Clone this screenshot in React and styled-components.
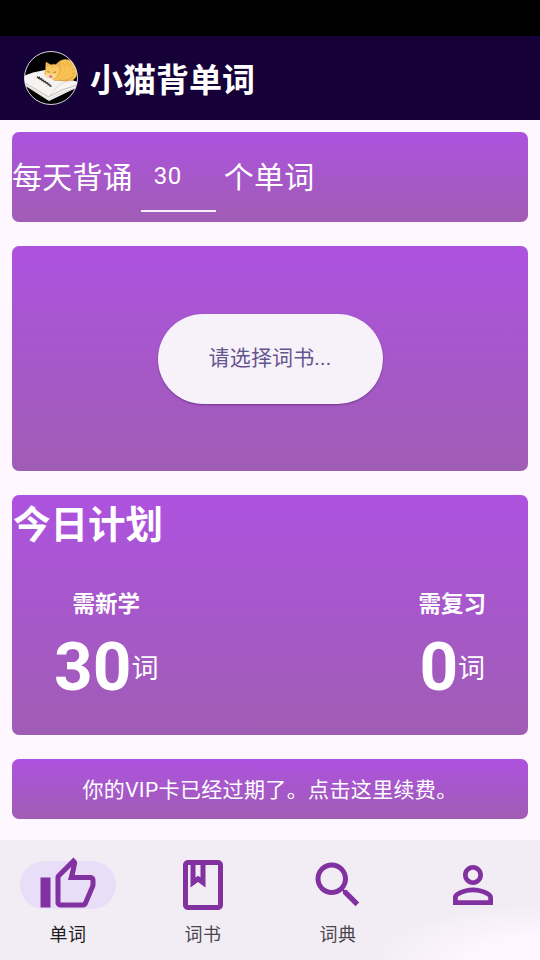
import React from "react";
import styled, { createGlobalStyle } from "styled-components";

const GlobalStyle = createGlobalStyle`
  * {
    box-sizing: border-box;
  }

  body {
    margin: 0;
    background: #fef7ff;
    font-family: Roboto, "Noto Sans CJK SC", sans-serif;
  }
`;

const Screen = styled.div`
  width: 540px;
  height: 960px;
  display: flex;
  flex-direction: column;
  overflow: hidden;
  background: #fef7ff;
`;

const StatusBar = styled.div`
  height: 36px;
  background: #000;
`;

const AppBar = styled.header`
  display: flex;
  align-items: center;
  gap: 12px;
  height: 84px;
  padding-left: 24px;
  background: #160038;
`;

const AppTitle = styled.h1`
  margin: 0;
  padding-top: 6px;
  color: #fff;
  font-size: 33px;
  line-height: 48px;
  font-weight: 700;
`;

const Content = styled.main`
  flex: 1;
  display: flex;
  flex-direction: column;
  gap: 24px;
  padding: 12px 12px 0;
`;

const Card = styled.section`
  height: ${(props) => props.$height}px;
  border-radius: 7px;
  overflow: hidden;
  color: #fff;
  background: linear-gradient(#ad52df, #a05db4);
`;

const GoalCard = styled(Card)`
  display: flex;
  align-items: flex-start;
  font-size: 30px;
  line-height: 44px;
`;

const GoalText = styled.span`
  padding-top: 24px;
  letter-spacing: 0.2px;
`;

const GoalInput = styled.div`
  width: 75px;
  height: 80px;
  margin: 0 8px;
  padding: 22px 0 0 13px;
  border-bottom: 2px solid rgba(255, 255, 255, 0.9);
  font-size: 24px;
  letter-spacing: 0.5px;
`;

const BookCard = styled(Card)`
  display: flex;
  align-items: center;
  justify-content: center;
`;

const BookButton = styled.button`
  width: 225px;
  height: 90px;
  padding: 0 0 5px;
  border: 0;
  border-radius: 45px;
  background: #f7f2fa;
  box-shadow: 0 1px 2px rgba(40, 0, 70, 0.4);
  color: #65558f;
  font-family: inherit;
  font-size: 21px;
  letter-spacing: 0.15px;
`;

const PlanTitle = styled.h2`
  margin: 0;
  padding: 2px 0 0 1px;
  font-size: 37.5px;
  line-height: 56px;
  font-weight: 700;
`;

const PlanRow = styled.div`
  display: flex;
  justify-content: space-between;
  padding: 34px 42px 0;
`;

const PlanItem = styled.div`
  display: flex;
  flex-direction: column;
  align-items: center;
`;

const PlanLabel = styled.div`
  font-size: 22.5px;
  line-height: 34px;
  font-weight: 700;
`;

const PlanCount = styled.div`
  display: flex;
  align-items: center;
  height: 92px;
`;

const Count = styled.span`
  font-size: 67.5px;
  line-height: 80px;
  font-weight: 700;
`;

const Unit = styled.span`
  padding-top: 4px;
  font-size: 27px;
  line-height: 40px;
`;

const VipCard = styled(Card)`
  display: flex;
  align-items: center;
  justify-content: center;
  padding-bottom: 3px;
  font-size: 21px;
  letter-spacing: 0.36px;
`;

const NavBar = styled.nav`
  display: grid;
  grid-template-columns: repeat(4, 1fr);
  height: 120px;
  background:
    radial-gradient(ellipse 165px 55px at 100% 100%, #fdf5ff 45%, rgba(253, 245, 255, 0) 100%),
    #f2edf4;
`;

const NavItem = styled.div`
  display: flex;
  flex-direction: column;
  align-items: center;
  padding-top: 21px;
`;

const Indicator = styled.div`
  display: flex;
  align-items: center;
  justify-content: center;
  width: 96px;
  height: 48px;
  border-radius: 24px;
  background: ${(props) => (props.$active ? "#e8def8" : "transparent")};
  color: #8231a0;
`;

const NavIcon = styled.svg`
  flex: none;
  width: 60px;
  height: 60px;
  fill: currentColor;
`;

const NavLabel = styled.span`
  margin-top: 12px;
  padding-left: 1px;
  color: ${(props) => (props.$active ? "#1d1b20" : "#49454f")};
  font-size: 18px;
  line-height: 27px;
  letter-spacing: 0.4px;
`;

const navItems = [
  {
    label: "单词",
    active: true,
    path: "M9 21h9c.83 0 1.54-.5 1.84-1.22l3.02-7.05c.09-.23.14-.47.14-.73v-2c0-1.1-.9-2-2-2h-6.31l.95-4.57.03-.32c0-.41-.17-.79-.44-1.06L14.17 1 7.58 7.59C7.22 7.95 7 8.45 7 9v10c0 1.1.9 2 2 2zM9 9l4.34-4.34L12 10h9v2l-3 7H9V9zM1 9h4v12H1z",
  },
  {
    label: "词书",
    path: "M18 2H6c-1.1 0-2 .9-2 2v16c0 1.1.9 2 2 2h12c1.1 0 2-.9 2-2V4c0-1.1-.9-2-2-2zM9 4h2v5l-1-.75L9 9V4zm9 16H6V4h1v9l3-2.25L13 13V4h5v16z",
  },
  {
    label: "词典",
    path: "M15.5 14h-.79l-.28-.27C15.41 12.59 16 11.11 16 9.5 16 5.91 13.09 3 9.5 3S3 5.91 3 9.5 5.91 16 9.5 16c1.61 0 3.09-.59 4.23-1.57l.27.28v.79l5 4.99L20.49 19l-4.99-5zm-6 0C7.01 14 5 11.99 5 9.5S7.01 5 9.5 5 14 7.01 14 9.5 11.99 14 9.5 14z",
  },
  {
    label: "",
    path: "M12 5.9c1.16 0 2.1.94 2.1 2.1s-.94 2.1-2.1 2.1S9.9 9.16 9.9 8s.94-2.1 2.1-2.1m0 9c2.97 0 6.1 1.46 6.1 2.1v1.1H5.9V17c0-.64 3.13-2.1 6.1-2.1M12 4C9.79 4 8 5.79 8 8s1.79 4 4 4 4-1.79 4-4-1.79-4-4-4zm0 9c-2.67 0-8 1.34-8 4v3h16v-3c0-2.66-5.33-4-8-4z",
  },
];

// Sleeping cat on an open book
function CatLogo() {
  return (
    <svg width="54" height="54" viewBox="0 0 54 54">
      <defs>
        <clipPath id="logo">
          <circle cx="27" cy="27" r="26.5" />
        </clipPath>
      </defs>
      <g clipPath="url(#logo)">
        <rect width="54" height="54" fill="#000" />
        <path d="M-1 25L9 21.5L21 19L36 25L54 31L52 37L25 50L0 34Z" fill="#f6f4f2" />
        <path d="M0 31.5Q12 38 24.5 46Q37 38 53 34" fill="none" stroke="#aaa6a3" strokeWidth="0.7" />
        <path d="M0 33.5Q12 40 24.5 48.5Q37 41 52 37" fill="none" stroke="#c8c4c1" strokeWidth="0.6" />
        <path d="M25 46Q32 34 43 30" fill="none" stroke="#d5d0cc" strokeWidth="0.7" />
        <path
          d="M13 25.5l1.6 1.8.8-.9.8 2 1.4-.7.4 1.9 1.5-.4.6 1.7 1.4-.4.7 1.8 1.5-.5.5 1.9 1.5-.3.4 1.7 1.6.1"
          fill="none"
          stroke="#333"
          strokeWidth="1.3"
        />
        <path
          d="M32 14C35 7.5 46 6.5 50 12C55 18 54 26 49 29C44 31 36 29 32 29.5C28 30 28 26 32 25Z"
          fill="#f6c152"
          stroke="#c88a35"
          strokeWidth="0.5"
        />
        <path
          d="M21.5 19L22 11L26.5 13.7Q30 12.8 32 13.5L36 11L36 19Q36 25 30 27L23 26Q19.5 23 21.5 19Z"
          fill="#f9ca60"
          stroke="#c88a35"
          strokeWidth="0.5"
        />
        <path
          d="M39 12l2 4M43 10.5l1.5 4M47 12l-.5 4M51 17l-3 2M52 22l-4 .5M28 14.5v2.5M30.5 14.5v2"
          stroke="#e5a543"
          strokeWidth="0.8"
        />
        <path d="M23 13l.4 3 2-1.5zM35 13l-2.4 2 2 1.5z" fill="#e79b72" />
        <path d="M23.5 20.5l2 .7M29.5 21.5l2.5-.6" stroke="#875025" strokeWidth="0.7" />
        <path d="M21 24Q24 21.5 27 23.5Q31 22 33 25Q29 29 25.5 27Q21 27.5 21 24Z" fill="#fbdc9c" />
        <ellipse cx="26.8" cy="25.6" rx="1.6" ry="1.3" fill="#e06c83" />
        <path d="M35 29Q45 31 49 25" fill="none" stroke="#d8983e" strokeWidth="0.8" />
      </g>
      <circle cx="27" cy="27" r="26.5" fill="none" stroke="#eeeaf4" strokeWidth="0.9" />
    </svg>
  );
}

function PlanCell({ label, count }) {
  return (
    <PlanItem>
      <PlanLabel>{label}</PlanLabel>
      <PlanCount>
        <Count>{count}</Count>
        <Unit>词</Unit>
      </PlanCount>
    </PlanItem>
  );
}

function App() {
  return (
    <Screen>
      <GlobalStyle />
      <StatusBar />
      <AppBar>
        <CatLogo />
        <AppTitle>小猫背单词</AppTitle>
      </AppBar>
      <Content>
        <GoalCard $height={90}>
          <GoalText>每天背诵</GoalText>
          <GoalInput>30</GoalInput>
          <GoalText>个单词</GoalText>
        </GoalCard>
        <BookCard $height={225}>
          <BookButton>请选择词书...</BookButton>
        </BookCard>
        <Card $height={240}>
          <PlanTitle>今日计划</PlanTitle>
          <PlanRow>
            <PlanCell label="需新学" count={30} />
            <PlanCell label="需复习" count={0} />
          </PlanRow>
        </Card>
        <VipCard $height={60}>你的VIP卡已经过期了。点击这里续费。</VipCard>
      </Content>
      <NavBar>
        {navItems.map((item, index) => (
          <NavItem key={index}>
            <Indicator $active={item.active}>
              <NavIcon viewBox="0 0 24 24">
                <path d={item.path} />
              </NavIcon>
            </Indicator>
            {item.label && <NavLabel $active={item.active}>{item.label}</NavLabel>}
          </NavItem>
        ))}
      </NavBar>
    </Screen>
  );
}

export default App;
